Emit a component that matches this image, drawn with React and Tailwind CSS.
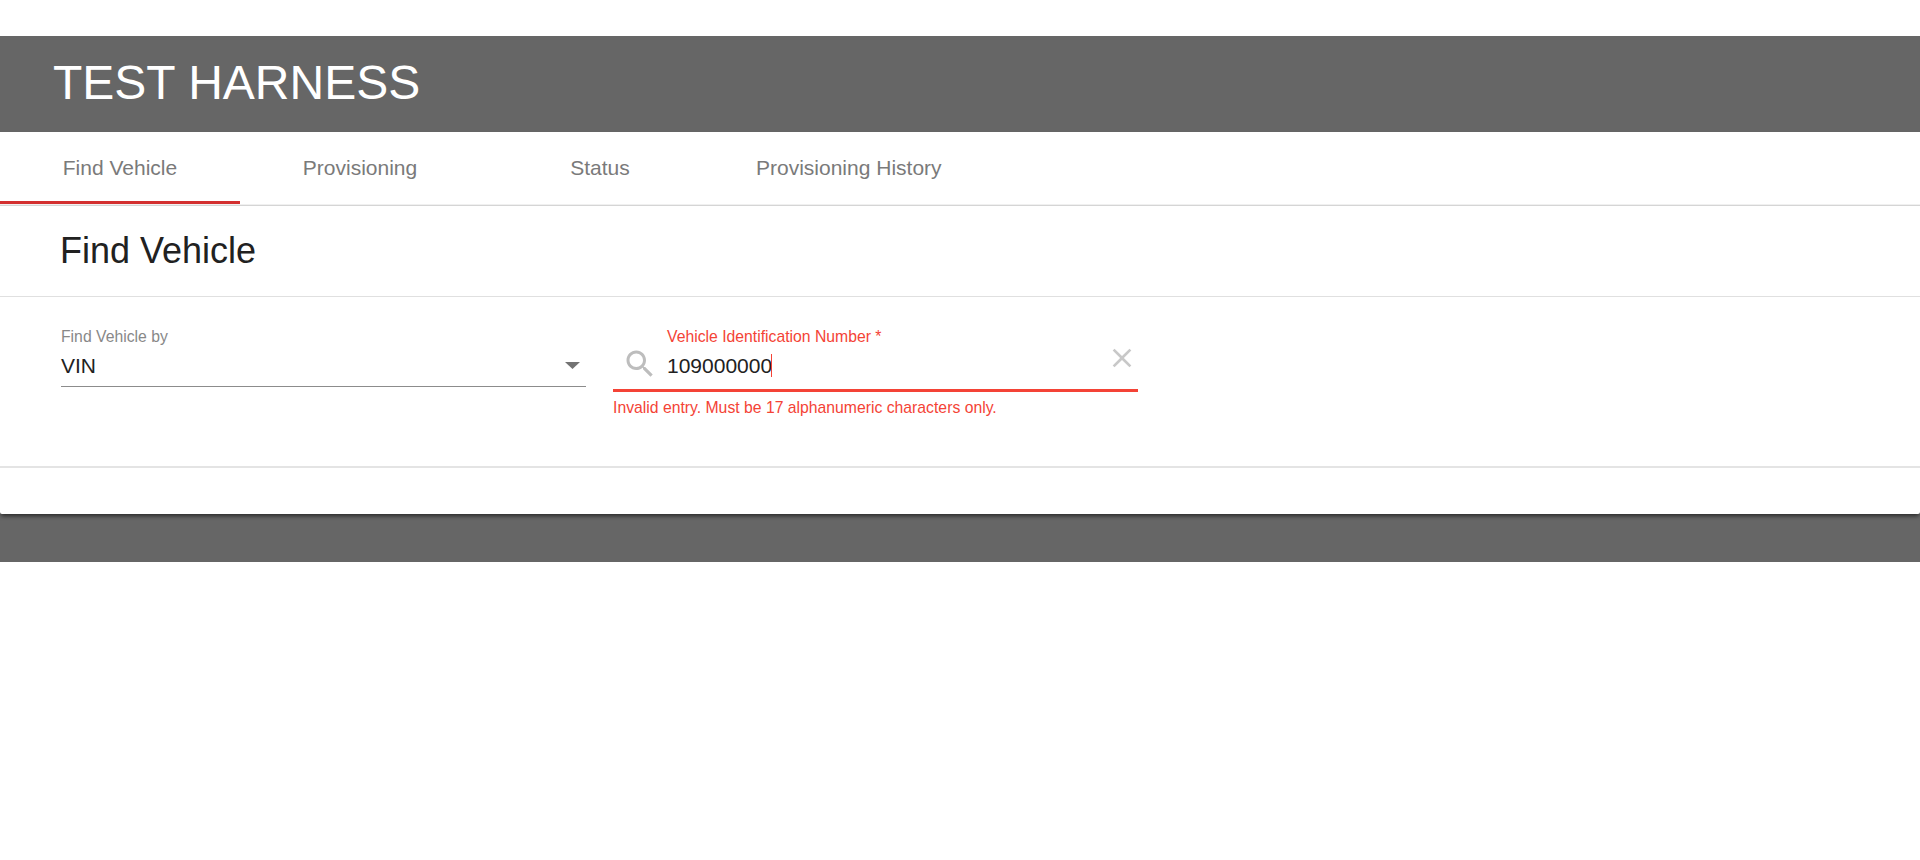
const tabs = ['Find Vehicle', 'Provisioning', 'Status', 'Provisioning History'];

function Tab({ label, active }) {
  return (
    <button
      className={
        'h-[72px] min-w-[240px] border-b-[3px] px-9 pt-[3px] text-[21px] leading-8 text-[#7a7a7a] ' +
        (active ? 'border-[#d32f2f]' : 'border-transparent')
      }
    >
      {label}
    </button>
  );
}

export default function App() {
  return (
    <div className="min-h-[860px] bg-white pt-9 font-['Liberation_Sans',Arial,sans-serif] text-[#212121]">
      <div className="bg-[#666666] pb-12">
        <header className="flex h-24 items-center pb-0.5 pl-[53px]">
          <h1 className="text-[48px] leading-none text-white">TEST HARNESS</h1>
        </header>
        <main className="h-[382px] rounded-b-[2px] bg-white shadow-[0_3px_4px_-1px_rgba(0,0,0,0.6)]">
          <nav className="flex h-[74px] border-b border-[#d5d5d5]">
            <div className="flex h-[73px] w-full border-b border-[#f0f0f0]">
              {tabs.map((label, i) => (
                <Tab key={label} label={label} active={i === 0} />
              ))}
            </div>
          </nav>
          <div className="flex h-[91px] items-center border-b border-[#e0e0e0] pl-[60px]">
            <h2 className="text-[36px] leading-none">Find Vehicle</h2>
          </div>
          <form className="flex h-[171px] gap-[27px] border-b-2 border-[#e4e4e4] pl-[61px] pt-[30px]">
            <div className="h-[60px] w-[525px] border-b border-[#8c8c8c]">
              <label className="block h-5 text-[15.75px] leading-5 text-[#888888]">Find Vehicle by</label>
              <div className="flex h-[37px] items-center justify-between pr-[6px]">
                <span className="text-[21px] leading-none">VIN</span>
                <svg className="h-[7px] w-[15px] text-[#737373]" viewBox="0 0 15 7" fill="currentColor">
                  <path d="M0 0h15L7.5 7z" />
                </svg>
              </div>
            </div>
            <div className="w-[525px]">
              <div className="flex h-[65px] border-b-[3px] border-[#f44336]">
                <svg className="ml-[8.5px] mt-[18.5px] size-9 shrink-0 text-[#bdbdbd]" viewBox="0 0 24 24" fill="currentColor">
                  <path d="M15.5 14h-.79l-.28-.27C15.41 12.59 16 11.11 16 9.5 16 5.91 13.09 3 9.5 3S3 5.91 3 9.5 5.91 16 9.5 16c1.61 0 3.09-.59 4.23-1.57l.27.28v.79l5 4.99L20.49 19l-4.99-5zm-6 0C7.01 14 5 11.99 5 9.5S7.01 5 9.5 5 14 7.01 14 9.5 11.99 14 9.5 14z" />
                </svg>
                <div className="ml-[9.5px] flex-1">
                  <label className="block h-5 text-[15.75px] leading-5 text-[#f44336]">Vehicle Identification Number *</label>
                  <div className="flex h-[37px] items-center">
                    <span className="text-[21px] leading-none">109000000</span>
                    <span className="-ml-px h-[23px] w-px bg-[#f44336]" />
                  </div>
                </div>
                <svg className="mt-[15px] size-8 shrink-0 text-[#c8c8c8]" viewBox="0 0 24 24" fill="currentColor">
                  <path d="M19 6.41L17.59 5 12 10.59 6.41 5 5 6.41 10.59 12 5 17.59 6.41 19 12 13.41 17.59 19 19 17.59 13.41 12z" />
                </svg>
              </div>
              <p className="pt-[6px] text-[15.75px] leading-5 text-[#f44336]">
                Invalid entry. Must be 17 alphanumeric characters only.
              </p>
            </div>
          </form>
        </main>
      </div>
    </div>
  );
}
